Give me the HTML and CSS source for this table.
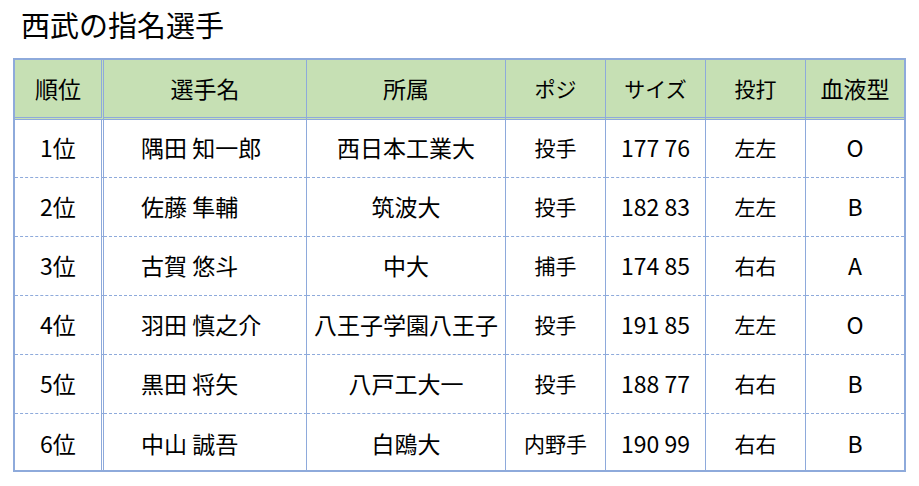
FILE: index.html
```html
<!DOCTYPE html>
<html lang="ja">
<head>
<meta charset="utf-8">
<title>西武の指名選手</title>
<link rel="stylesheet" href="styles.css">
</head>
<body>
<div class="title">西武の指名選手</div>
<table class="draft">
  <colgroup>
    <col class="c1"><col class="c2"><col class="c3"><col class="c4"><col class="c5"><col class="c6"><col class="c7">
  </colgroup>
  <thead>
    <tr>
      <th class="rank">順位</th>
      <th>選手名</th>
      <th>所属</th>
      <th class="small">ポジ</th>
      <th class="small">サイズ</th>
      <th class="small">投打</th>
      <th class="last">血液型</th>
    </tr>
  </thead>
  <tbody>
    <tr class="first">
      <td class="rank">1位</td><td class="name">隅田 知一郎</td><td>西日本工業大</td><td class="small">投手</td><td>177 76</td><td class="small">左左</td><td class="last">O</td>
    </tr>
    <tr>
      <td class="rank">2位</td><td class="name">佐藤 隼輔</td><td>筑波大</td><td class="small">投手</td><td>182 83</td><td class="small">左左</td><td class="last">B</td>
    </tr>
    <tr>
      <td class="rank">3位</td><td class="name">古賀 悠斗</td><td>中大</td><td class="small">捕手</td><td>174 85</td><td class="small">右右</td><td class="last">A</td>
    </tr>
    <tr>
      <td class="rank">4位</td><td class="name">羽田 慎之介</td><td>八王子学園八王子</td><td class="small">投手</td><td>191 85</td><td class="small">左左</td><td class="last">O</td>
    </tr>
    <tr>
      <td class="rank">5位</td><td class="name">黒田 将矢</td><td>八戸工大一</td><td class="small">投手</td><td>188 77</td><td class="small">右右</td><td class="last">B</td>
    </tr>
    <tr class="final">
      <td class="rank">6位</td><td class="name">中山 誠吾</td><td>白鴎大</td><td class="small">内野手</td><td>190 99</td><td class="small">右右</td><td class="last">B</td>
    </tr>
  </tbody>
</table>
</body>
</html>
```
FILE: styles.css
```css
html, body {
  margin: 0;
  padding: 0;
  background: #ffffff;
}
body {
  font-family: "Noto Sans CJK JP", "Noto Sans", sans-serif;
  color: #000000;
}
.title {
  height: 58px;
  box-sizing: border-box;
  padding-left: 21px;
  padding-top: 4px;
  font-size: 29px;
  line-height: 40px;
}
.draft {
  margin-left: 13px;
  border: 2px solid #8eaadb;
  border-collapse: separate;
  border-spacing: 0;
  table-layout: fixed;
  width: 893px;
}
.c1 { width: 89px; }
.c2 { width: 203px; }
.c3 { width: 199px; }
.c4 { width: 100px; }
.c5 { width: 100px; }
.c6 { width: 100px; }
.c7 { width: 98px; }
.draft th,
.draft td {
  box-sizing: border-box;
  padding: 0 0 3px 0;
  text-align: center;
  vertical-align: middle;
  font-size: 23px;
  font-weight: normal;
  line-height: 28px;
  white-space: nowrap;
  border-right: 1px solid #8eaadb;
  border-bottom: 1px dashed #8eaadb;
}
.draft th {
  background: #c6e0b4;
  height: 60px;
  padding-bottom: 2px;
  border-bottom: 3px double #8eaadb;
}
.draft td {
  height: 59px;
}
.draft tr.first td {
  height: 58px;
}
.draft .rank {
  border-right: 3px double #8eaadb;
}
.draft .last {
  border-right: none;
}
.draft .small {
  font-size: 21px;
}
.draft td.name {
  text-align: left;
  padding-left: 37px;
}
.draft tr.final td {
  border-bottom: none;
  height: 56px;
  padding-top: 1px;
  padding-bottom: 0;
}
```
